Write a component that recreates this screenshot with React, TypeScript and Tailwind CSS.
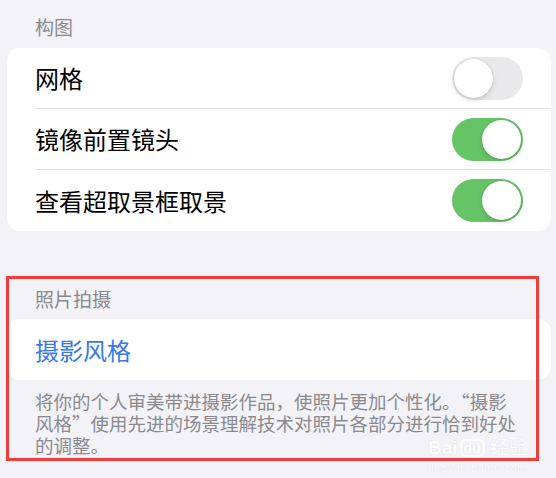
import clsx from "clsx";

function Toggle({ on }: { on: boolean }) {
  return (
    <div
      className={clsx(
        "w-[71px] h-[43px] rounded-full p-[2px] flex shrink-0",
        on ? "bg-[#65c466] justify-end" : "bg-[#e9e9eb] justify-start"
      )}
    >
      <div className="w-[39px] h-[39px] rounded-full bg-white shadow-[0_2px_5px_rgba(0,0,0,0.16),0_0_1px_rgba(0,0,0,0.18)]" />
    </div>
  );
}

function Row({ label, on, last }: { label: string; on: boolean; last?: boolean }) {
  return (
    <div className="pl-[28px] h-[61px]">
      <div
        className={clsx(
          "h-full flex items-center justify-between pr-[28px]",
          !last && "border-b border-[#e3e3e6]"
        )}
      >
        <span className="text-[24px] leading-[30px] text-black">{label}</span>
        <Toggle on={on} />
      </div>
    </div>
  );
}

export default function App() {
  return (
    <div className="relative w-[556px] h-[478px] overflow-hidden bg-[#f2f2f7] font-['Noto_Sans_CJK_SC',sans-serif]">
      <div className="pt-[15px] pl-[35px] mb-[9px] text-[19px] leading-[24px] text-[#8a8a8e]">构图</div>
      <div className="ml-[7px] mr-[5px] bg-white rounded-[13px] overflow-hidden">
        <Row label="网格" on={false} />
        <Row label="镜像前置镜头" on />
        <Row label="查看超取景框取景" on last />
      </div>

      <div className="mt-[56px] pl-[35px] mb-[8px] text-[19px] leading-[24px] text-[#8a8a8e]">照片拍摄</div>
      <div className="ml-[7px] mr-[5px] bg-white rounded-[13px] h-[61px] flex items-center pl-[28px]">
        <span className="text-[24px] leading-[30px] text-[#3478f6]">摄影风格</span>
      </div>
      <p className="mt-[10px] pl-[35px] pr-[34px] text-[18.5px] leading-[22px] text-[#8a8a8e]">
        将你的个人审美带进摄影作品，使照片更加个性化。“摄影风格”使用先进的场景理解技术对照片各部分进行恰到好处的调整。
      </p>

      {/* 水印 */}
      <div className="absolute left-[428px] top-[438px] flex flex-col items-start text-white opacity-90 [text-shadow:0_0_1px_rgba(0,0,0,0.15)] font-['Liberation_Sans','Noto_Sans_CJK_SC',sans-serif]">
        <div className="h-[20px] flex items-center gap-[2px] text-[19px] leading-[20px] font-bold">
          <span>Bai</span>
          <span className="rounded-[6px] border-[2px] border-white px-[2px] text-[14px] leading-[14px]">du</span>
          <span className="ml-[3px] font-normal">经验</span>
        </div>
        <div className="h-[12px] mt-[4px] text-[11px] leading-[12px] tracking-[0.6px]">jingyan.baidu.com</div>
      </div>

      {/* 红框标注 */}
      <div className="absolute left-[6px] top-[276px] w-[533px] h-[185px] border-[3px] border-[#f23b3b] pointer-events-none" />
    </div>
  );
}
